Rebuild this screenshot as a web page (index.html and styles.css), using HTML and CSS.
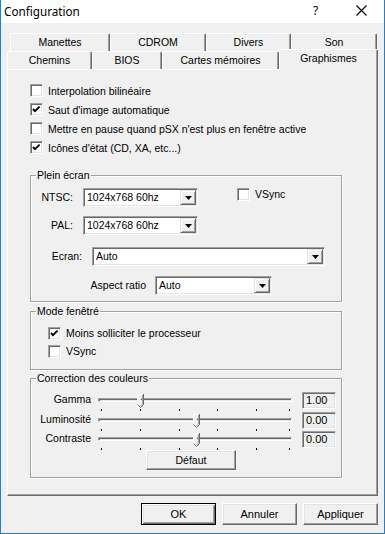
FILE: index.html
```html
<!DOCTYPE html>
<html>
<head>
<meta charset="utf-8">
<link rel="stylesheet" href="styles.css">
</head>
<body>
<div class="window">
  <div class="titlebar">
    <span class="title">Configuration</span>
    <span class="cap-btn help">?</span>
    <span class="cap-btn close"><svg width="11" height="11" viewBox="0 0 11 11"><path d="M0.5 0.5 L10.5 10.5 M10.5 0.5 L0.5 10.5" stroke="#000" stroke-width="1.1" fill="none"/></svg></span>
  </div>
  <div class="body">
    <div class="tabs">
      <div class="tab-row row1">
        <div class="tab w-man">Manettes</div>
        <div class="tab w-cd">CDROM</div>
        <div class="tab w-div">Divers</div>
        <div class="tab w-son">Son</div>
      </div>
      <div class="tab-row row2">
        <div class="tab w-che">Chemins</div>
        <div class="tab w-bio">BIOS</div>
        <div class="tab w-car">Cartes mémoires</div>
        <div class="tab w-gra selected">Graphismes</div>
      </div>
    </div>
    <div class="panel">
      <div class="checks">
        <div class="cb"><span class="box"></span><span class="cb-text">Interpolation bilinéaire</span></div>
        <div class="cb"><span class="box"><svg width="11" height="11" viewBox="0 0 11 11"><path d="M2 5 L4 7.2 L8.6 2.6" stroke="#000" stroke-width="1.9" fill="none"/></svg></span><span class="cb-text">Saut d'image automatique</span></div>
        <div class="cb"><span class="box"></span><span class="cb-text">Mettre en pause quand pSX n'est plus en fenêtre active</span></div>
        <div class="cb"><span class="box"><svg width="11" height="11" viewBox="0 0 11 11"><path d="M2 5 L4 7.2 L8.6 2.6" stroke="#000" stroke-width="1.9" fill="none"/></svg></span><span class="cb-text">Icônes d'état (CD, XA, etc...)</span></div>
      </div>

      <div class="group g-plein">
        <div class="group-title">Plein écran</div>
        <div class="frow r-ntsc">
          <span class="lbl l-ntsc">NTSC:</span>
          <div class="combo c-res"><span class="val">1024x768 60hz</span><span class="drop"><svg width="7" height="4" viewBox="0 0 7 4"><path d="M0 0 H7 L3.5 4 Z" fill="#000"/></svg></span></div>
          <div class="cb cb-vsync"><span class="box"></span><span class="cb-text">VSync</span></div>
        </div>
        <div class="frow r-pal">
          <span class="lbl l-ntsc">PAL:</span>
          <div class="combo c-res"><span class="val">1024x768 60hz</span><span class="drop"><svg width="7" height="4" viewBox="0 0 7 4"><path d="M0 0 H7 L3.5 4 Z" fill="#000"/></svg></span></div>
        </div>
        <div class="frow r-ecran">
          <span class="lbl l-ecran">Ecran:</span>
          <div class="combo c-ecran"><span class="val">Auto</span><span class="drop"><svg width="7" height="4" viewBox="0 0 7 4"><path d="M0 0 H7 L3.5 4 Z" fill="#000"/></svg></span></div>
        </div>
        <div class="frow r-aspect">
          <span class="lbl l-aspect">Aspect ratio</span>
          <div class="combo c-aspect"><span class="val">Auto</span><span class="drop"><svg width="7" height="4" viewBox="0 0 7 4"><path d="M0 0 H7 L3.5 4 Z" fill="#000"/></svg></span></div>
        </div>
      </div>

      <div class="group g-fen">
        <div class="group-title">Mode fenêtré</div>
        <div class="cb cb-fen"><span class="box"><svg width="11" height="11" viewBox="0 0 11 11"><path d="M2 5 L4 7.2 L8.6 2.6" stroke="#000" stroke-width="1.9" fill="none"/></svg></span><span class="cb-text">Moins solliciter le processeur</span></div>
        <div class="cb cb-fen"><span class="box"></span><span class="cb-text">VSync</span></div>
      </div>

      <div class="group g-col">
        <div class="group-title">Correction des couleurs</div>
        <div class="srow s1">
          <span class="slbl">Gamma</span>
          <div class="slider">
            <div class="track"></div>
            <div class="ticks"><i></i><i></i><i></i><i></i><i></i><i></i></div>
            <svg class="thumb" style="left:39px" width="7" height="14" viewBox="0 0 7 14"><path d="M0.5 13 V0.5 H6" stroke="#fff" fill="#f0f0f0"/><path d="M6.5 0 V10.5 L3.5 13.5 L0.5 10.5" stroke="#696969" fill="none"/><path d="M5.5 1 V10 L3.5 12" stroke="#a0a0a0" fill="none"/></svg>
          </div>
          <span class="vbox">1.00</span>
        </div>
        <div class="srow">
          <span class="slbl">Luminosité</span>
          <div class="slider">
            <div class="track"></div>
            <div class="ticks"><i></i><i></i><i></i><i></i><i></i><i></i></div>
            <svg class="thumb" style="left:95px" width="7" height="14" viewBox="0 0 7 14"><path d="M0.5 13 V0.5 H6" stroke="#fff" fill="#f0f0f0"/><path d="M6.5 0 V10.5 L3.5 13.5 L0.5 10.5" stroke="#696969" fill="none"/><path d="M5.5 1 V10 L3.5 12" stroke="#a0a0a0" fill="none"/></svg>
          </div>
          <span class="vbox">0.00</span>
        </div>
        <div class="srow">
          <span class="slbl">Contraste</span>
          <div class="slider">
            <div class="track"></div>
            <div class="ticks"><i></i><i></i><i></i><i></i><i></i><i></i></div>
            <svg class="thumb" style="left:95px" width="7" height="14" viewBox="0 0 7 14"><path d="M0.5 13 V0.5 H6" stroke="#fff" fill="#f0f0f0"/><path d="M6.5 0 V10.5 L3.5 13.5 L0.5 10.5" stroke="#696969" fill="none"/><path d="M5.5 1 V10 L3.5 12" stroke="#a0a0a0" fill="none"/></svg>
          </div>
          <span class="vbox">0.00</span>
        </div>
        <div class="btn btn-defaut">Défaut</div>
      </div>
    </div>
    <div class="buttons">
      <div class="btn btn-main default">OK</div>
      <div class="btn btn-main">Annuler</div>
      <div class="btn btn-main">Appliquer</div>
    </div>
  </div>
</div>
</body>
</html>
```
FILE: styles.css
```css
html, body {
  margin: 0;
  padding: 0;
}
body {
  font-family: "Liberation Sans", Arial, sans-serif;
  font-size: 10.5px;
  color: #000;
  background: #f0f0f0;
}
.window {
  width: 385px;
  height: 534px;
  box-sizing: border-box;
  border: 1px solid #1883d7;
  border-top: none;
  background: #f0f0f0;
  display: flex;
  flex-direction: column;
}
.titlebar {
  height: 23px;
  flex: none;
  background: #fff;
  display: flex;
  align-items: flex-start;
}
.title {
  flex: 1;
  padding-left: 3px;
  padding-top: 3px;
  font-family: "Noto Sans", "Open Sans", sans-serif;
  font-size: 11.7px;
  line-height: 16px;
}
.cap-btn {
  height: 23px;
  display: flex;
  align-items: center;
  justify-content: center;
}
.help {
  width: 45px;
  font-family: "Noto Sans", sans-serif;
  font-size: 12px;
  padding-bottom: 2px;
  box-sizing: border-box;
}
.close {
  width: 46px;
  padding-bottom: 2px;
  box-sizing: border-box;
}
.body {
  flex: 1;
  padding: 10px 6px 0 6px;
  display: flex;
  flex-direction: column;
}

/* tabs */
.tab-row {
  display: flex;
  height: 18px;
  align-items: flex-start;
}
.row1 { margin-left: 3px; }
.tab {
  box-sizing: border-box;
  height: 18px;
  background: #f0f0f0;
  border-top: 1px solid #fff;
  border-left: 1px solid #fff;
  border-right: 1px solid #696969;
  box-shadow: inset -1px 0 0 #a0a0a0;
  border-top-left-radius: 2px;
  border-top-right-radius: 2px;
  text-align: center;
  line-height: 17px;
}
.w-man { width: 100px; }
.w-cd { width: 96px; }
.w-div { width: 85px; }
.w-son { width: 86px; }
.w-che { width: 85px; }
.w-bio { width: 70px; }
.w-car { width: 117px; }
.w-gra { width: 99px; }
.tab.selected {
  height: 21px;
  margin-top: -2px;
  line-height: 16px;
  z-index: 1;
}

/* panel */
.panel {
  box-sizing: border-box;
  height: 427px;
  flex: none;
  border-top: 1px solid #fff;
  border-left: 1px solid #fff;
  border-right: 1px solid #696969;
  border-bottom: 1px solid #696969;
  box-shadow: inset -1px -1px 0 #a0a0a0;
  padding: 11px 0 0 22px;
}
.checks .cb { height: 19px; }
.cb {
  display: flex;
  align-items: center;
}
.box {
  width: 13px;
  height: 13px;
  flex: none;
  box-sizing: border-box;
  background: #fff;
  border: 1px solid;
  border-color: #a0a0a0 #fff #fff #a0a0a0;
  box-shadow: inset 1px 1px 0 #696969, inset -1px -1px 0 #e3e3e3;
  display: flex;
  align-items: center;
  justify-content: center;
}
.cb-text { margin-left: 5px; white-space: nowrap; }

/* group boxes */
.group {
  width: 312px;
  box-sizing: border-box;
  border: 1px solid #a0a0a0;
  box-shadow: 1px 1px 0 #fff, inset 1px 1px 0 #fff;
}
.group-title {
  width: fit-content;
  margin: -7px 0 0 5px;
  padding: 0 1px;
  height: 13px;
  line-height: 13px;
  background: #f0f0f0;
  white-space: nowrap;
}
.g-plein { margin-top: 18px; padding-bottom: 6px; }
.g-fen { margin-top: 9px; padding-bottom: 9px; }
.g-col { margin-top: 8px; padding-bottom: 7px; }

.frow {
  display: flex;
  align-items: center;
  height: 19px;
}
.r-ntsc { margin-top: 6px; align-items: flex-start; }
.r-pal { margin-top: 9px; }
.r-ecran { margin-top: 12px; }
.r-aspect { margin-top: 10px; }
.lbl {
  text-align: right;
  line-height: 19px;
  white-space: nowrap;
}
.l-ntsc { width: 42px; margin-right: 10px; }
.l-ecran { width: 51px; margin-right: 10px; }
.l-aspect { width: 115px; margin-right: 9px; }
.cb-vsync { margin-left: 39px; margin-top: 0; }
.cb-vsync .cb-text { margin-left: 5px; line-height: 13px; }

.combo {
  display: flex;
  align-items: center;
  height: 19px;
  box-sizing: border-box;
  background: #fff;
  border: 1px solid;
  border-color: #a0a0a0 #fff #fff #a0a0a0;
  box-shadow: inset 1px 1px 0 #696969, inset -1px -1px 0 #e3e3e3;
  padding: 1px 1px 1px 2px;
}
.c-res { width: 115px; }
.c-ecran { width: 233px; }
.c-aspect { width: 117px; }
.combo .val {
  flex: 1;
  padding-left: 1px;
  line-height: 15px;
  white-space: nowrap;
}
.drop {
  width: 16px;
  height: 15px;
  box-sizing: border-box;
  background: #f0f0f0;
  border: 1px solid;
  border-color: #e3e3e3 #696969 #696969 #e3e3e3;
  box-shadow: inset 1px 1px 0 #fff, inset -1px -1px 0 #a0a0a0;
  display: flex;
  align-items: center;
  justify-content: center;
}

.cb-fen { height: 18px; margin-left: 17px; }
.g-fen .group-title + .cb-fen { margin-top: 6px; }

/* sliders */
.srow {
  display: flex;
  align-items: flex-start;
  height: 19px;
}
.srow.s1 { margin-top: 5px; height: 20px; }
.slbl {
  width: 60px;
  margin-right: 7px;
  text-align: right;
  line-height: 19px;
  white-space: nowrap;
}
.slider {
  position: relative;
  width: 194px;
  height: 19px;
}
.track {
  margin-top: 8px;
  height: 4px;
  box-sizing: border-box;
  border: 1px solid;
  border-color: #a0a0a0 #fff #fff #a0a0a0;
  background: #e7e7e7;
  box-shadow: inset 1px 1px 0 #696969;
}
.ticks {
  display: flex;
  margin-top: 7px;
  height: 2px;
}
.ticks i {
  width: 1px;
  height: 2px;
  background: #000;
  flex: none;
}
.ticks i:nth-child(1) { margin-left: 3px; }
.ticks i:nth-child(2) { margin-left: 38px; }
.ticks i:nth-child(3) { margin-left: 38px; }
.ticks i:nth-child(4) { margin-left: 37px; }
.ticks i:nth-child(5) { margin-left: 38px; }
.ticks i:nth-child(6) { margin-left: 32px; }
.thumb {
  position: absolute;
  top: 4px;
}
.vbox {
  margin-left: 10px;
  margin-top: 2px;
  width: 34px;
  height: 17px;
  box-sizing: border-box;
  border: 1px solid;
  border-color: #a0a0a0 #fff #fff #a0a0a0;
  box-shadow: inset 1px 1px 0 #696969, inset -1px -1px 0 #e3e3e3;
  background: #f0f0f0;
  padding-left: 3px;
  line-height: 15px;
  font-size: 11px;
}

/* buttons */
.btn {
  box-sizing: border-box;
  background: #f0f0f0;
  border: 1px solid;
  border-color: #fff #696969 #696969 #fff;
  box-shadow: inset -1px -1px 0 #a0a0a0, inset 1px 1px 0 #e3e3e3;
  text-align: center;
  display: flex;
  align-items: center;
  justify-content: center;
}
.btn-defaut {
  width: 90px;
  height: 20px;
  margin: 2px 0 0 115px;
}
.buttons {
  display: flex;
  justify-content: flex-end;
  gap: 6px;
  margin-top: 7px;
}
.btn-main {
  width: 75px;
  height: 22px;
  font-size: 11px;
}
.btn-main.default {
  border: 1px solid #000;
  box-shadow: inset 1px 1px 0 #fff, inset -1px -1px 0 #696969, inset 2px 2px 0 #e3e3e3, inset -2px -2px 0 #a0a0a0;
}
```
